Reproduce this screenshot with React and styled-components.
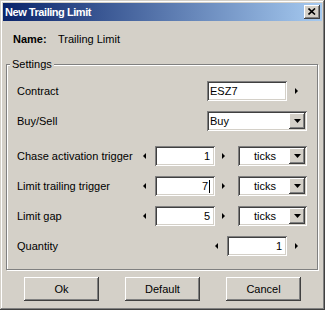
import React from "react";
import styled, { createGlobalStyle } from "styled-components";

const Global = createGlobalStyle`
  html, body { margin: 0; padding: 0; background: #d4d0c8; }
  * { box-sizing: border-box; }
`

const face = "#d4d0c8"

const Window = styled.div`
  width: 325px;
  height: 310px;
  padding: 3px;
  background: ${face};
  font-family: "Liberation Sans", Arial, sans-serif;
  font-size: 11px;
  color: #000;
  display: flex;
  flex-direction: column;
  box-shadow: inset -1px -1px 0 #404040, inset 1px 1px 0 ${face},
    inset -2px -2px 0 #808080, inset 2px 2px 0 #fff;
`

const TitleBar = styled.div`
  height: 18px;
  display: flex;
  align-items: center;
  justify-content: space-between;
  padding: 0 2px 0 2px;
  background: linear-gradient(to right, #0a246a, #a6caf0);
`

const Title = styled.span`
  color: #fff;
  font-weight: bold;
  font-size: 11px;
  letter-spacing: -0.45px;
`

const Raised = styled.div`
  background: ${face};
  box-shadow: inset -1px -1px 0 #404040, inset 1px 1px 0 #fff,
    inset -2px -2px 0 #808080, inset 2px 2px 0 ${face};
`

const CloseBtn = styled(Raised)`
  width: 16px;
  height: 14px;
  display: flex;
  align-items: center;
  justify-content: center;
  padding-bottom: 1px;
`

const NameRow = styled.div`
  display: flex;
  margin: 11px 0 0 10px;
  line-height: 14px;
  height: 14px;
`

const NameLabel = styled.span`
  font-weight: bold;
  width: 45px;
`

const Group = styled.fieldset`
  margin: 11px 4px 0 3px;
  padding: 0;
  border: 1px solid #808080;
  box-shadow: inset 1px 1px 0 #fff, 1px 1px 0 #fff;
  min-width: 0;
`

const Legend = styled.legend`
  margin-left: 3px;
  padding: 0 2px;
  line-height: 14px;
  background: ${face};
`

const Rows = styled.div`
  display: flex;
  flex-direction: column;
  gap: 10px;
  padding: 10px 10px 13px 10px;
`

const Row = styled.div`
  display: flex;
  align-items: center;
  justify-content: space-between;
  height: 20px;
  margin-top: ${p => (p.$extra ? "5px" : "0")};
`

const Label = styled.span``

const Controls = styled.div`
  display: flex;
  align-items: center;
`

const Field = styled.div`
  width: ${p => p.$w}px;
  height: 20px;
  background: #fff;
  display: flex;
  align-items: center;
  justify-content: ${p => (p.$align === "right" ? "flex-end" : "flex-start")};
  padding: 0 ${p => (p.$align === "right" ? "5px" : "3px")} 0 3px;
  box-shadow: inset 1px 1px 0 #808080, inset -1px -1px 0 #fff,
    inset 2px 2px 0 #404040, inset -2px -2px 0 ${face};
`

const Caret = styled.span`
  display: inline-block;
  width: 1px;
  height: 13px;
  background: #000;
  margin-left: 1px;
`

const Combo = styled(Field)`
  padding: 0 2px 0 3px;
  justify-content: space-between;
`

const ComboText = styled.span`
  flex: 1;
  text-align: ${p => (p.$center ? "center" : "left")};
`

const DropBtn = styled(Raised)`
  width: 16px;
  height: 16px;
  display: flex;
  align-items: center;
  justify-content: center;
`

const Spin = styled.div`
  width: ${p => p.$w}px;
  height: 20px;
  display: flex;
  align-items: center;
  justify-content: center;
  margin-right: ${p => p.$mr || 0}px;
`

const Buttons = styled.div`
  display: flex;
  justify-content: center;
  gap: 26px;
  margin-top: 7px;
  margin-left: -3px;
  margin-right: -3px;
`

const Button = styled(Raised)`
  width: 75px;
  height: 24px;
  display: flex;
  align-items: center;
  justify-content: center;
`

function Arrow({ dir }) {
  const pts = dir === "left" ? "3,0 3,6 0,3" : "0,0 0,6 3,3"
  return (
    <svg width="4" height="7" viewBox="0 0 4 7">
      <polygon points={pts} fill="#000" />
    </svg>
  )
}

function Down() {
  return (
    <svg width="7" height="4" viewBox="0 0 7 4">
      <polygon points="0,0 7,0 3.5,4" fill="#000" />
    </svg>
  )
}

function Dropdown({ w, text, center }) {
  return (
    <Combo $w={w}>
      <ComboText $center={center}>{text}</ComboText>
      <DropBtn><Down /></DropBtn>
    </Combo>
  )
}

function Stepper({ value, caret, w = 60 }) {
  return (
    <>
      <Spin $w={10} $mr={5}><Arrow dir="left" /></Spin>
      <Field $w={w} $align="right">{value}{caret && <Caret />}</Field>
      <Spin $w={18}><Arrow dir="right" /></Spin>
    </>
  )
}

const triggers = [
  { label: "Chase activation trigger", value: "1" },
  { label: "Limit trailing trigger", value: "7", caret: true },
  { label: "Limit gap", value: "5" },
]

export default function App() {
  return (
    <Window>
      <Global />
      <TitleBar>
        <Title>New Trailing Limit</Title>
        <CloseBtn>
          <svg width="8" height="7" viewBox="0 0 8 7">
            <path d="M0.5 0.5 L7 6.5 M7 0.5 L0.5 6.5" stroke="#000" strokeWidth="1.6" />
          </svg>
        </CloseBtn>
      </TitleBar>
      <NameRow>
        <NameLabel>Name:</NameLabel>
        <span>Trailing Limit</span>
      </NameRow>
      <Group>
        <Legend>Settings</Legend>
        <Rows>
          <Row>
            <Label>Contract</Label>
            <Controls>
              <Field $w={80}>ESZ7</Field>
              <Spin $w={20}><Arrow dir="right" /></Spin>
            </Controls>
          </Row>
          <Row>
            <Label>Buy/Sell</Label>
            <Controls>
              <Dropdown w={100} text="Buy" />
            </Controls>
          </Row>
          {triggers.map((t, i) => (
            <Row key={t.label} $extra={i === 0}>
              <Label>{t.label}</Label>
              <Controls>
                <Stepper value={t.value} caret={t.caret} />
                <Spin $w={5} />
                <Dropdown w={69} text="ticks" center />
              </Controls>
            </Row>
          ))}
          <Row>
            <Label>Quantity</Label>
            <Controls>
              <Spin $w={10} $mr={5}><Arrow dir="left" /></Spin>
              <Field $w={60} $align="right">1</Field>
              <Spin $w={20}><Arrow dir="right" /></Spin>
            </Controls>
          </Row>
        </Rows>
      </Group>
      <Buttons>
        <Button>Ok</Button>
        <Button>Default</Button>
        <Button>Cancel</Button>
      </Buttons>
    </Window>
  )
}
